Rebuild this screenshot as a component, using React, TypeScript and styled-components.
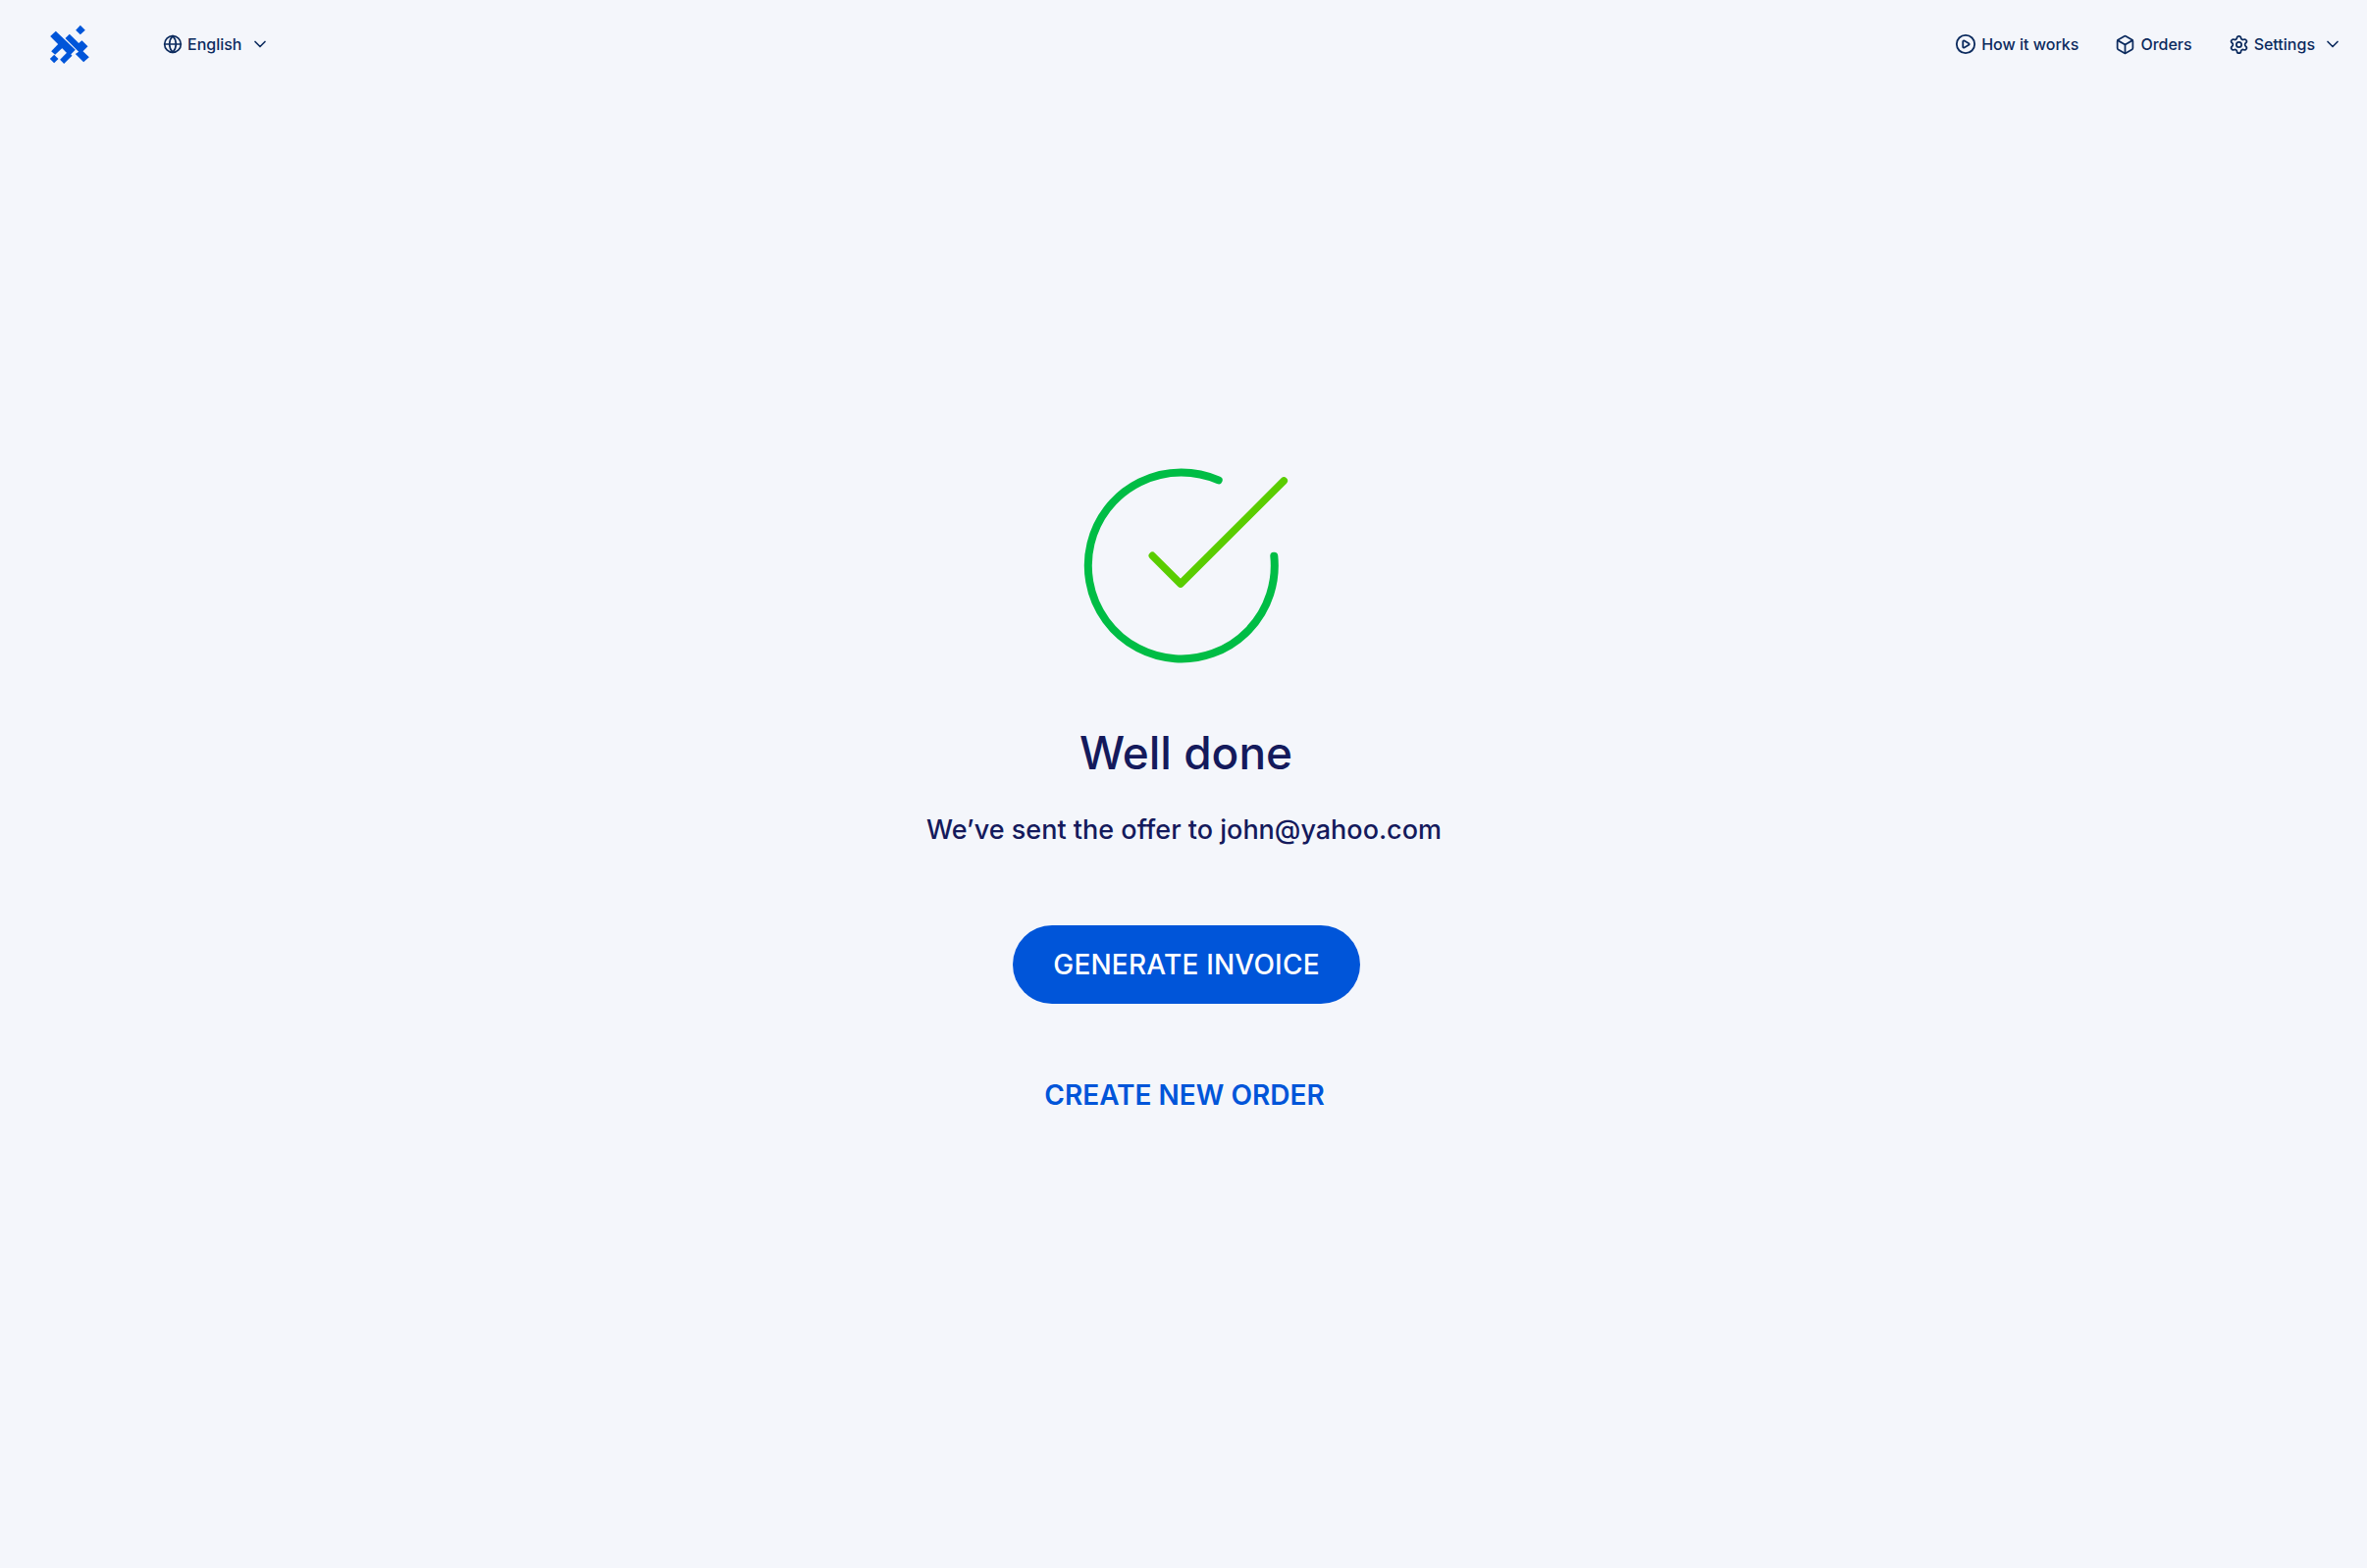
import React from "react";
import styled, {createGlobalStyle} from "styled-components";
import {Box, ChevronDown, CirclePlay, Globe, Settings} from "lucide-react";

const GlobalStyle = createGlobalStyle`
  html, body {
    margin: 0;
    padding: 0;
    background: #f4f6fb;
  }

  body {
    font-family: Inter, "Open Sans", sans-serif;
  }
`

const Page = styled.div`
  width: 2412px;
  height: 1598px;
  display: flex;
  flex-direction: column;
  overflow: hidden;
  background: #f4f6fb;
`

const Header = styled.header`
  height: 90px;
  box-sizing: border-box;
  padding: 0 25px 0 50px;
  display: flex;
  align-items: center;
  justify-content: space-between;
`

const LeftGroup = styled.div`
  display: flex;
  align-items: center;
  gap: 74px;
`

const NavGroup = styled.nav`
  display: flex;
  align-items: center;
  gap: 37px;
`

const NavItem = styled.div`
  display: flex;
  align-items: center;
  gap: 5px;
  color: #0c2b5e;
  font-size: 16px;
  font-weight: 500;
  line-height: 20px;
`

const Caret = styled(ChevronDown)`
  margin-left: 3px;
`

const Main = styled.main`
  display: flex;
  flex-direction: column;
  align-items: center;
  padding-top: 385px;
`

const SuccessIcon = styled.svg`
  display: block;
  width: 220px;
  height: 210px;
  margin-left: 14px;
`

const Title = styled.h1`
  margin: 54px 0 0 5px;
  color: #141a5c;
  font-size: 46px;
  font-weight: 500;
  line-height: 56px;
`

const Message = styled.p`
  margin: 33px 0 0 1px;
  color: #141a5c;
  font-size: 27px;
  font-weight: 500;
  line-height: 36px;
`

const PrimaryButton = styled.button`
  margin: 79px 0 0 6px;
  width: 354px;
  height: 80px;
  border: none;
  border-radius: 40px;
  background: #0055d9;
  color: #fff;
  font-family: inherit;
  font-size: 28px;
  font-weight: 500;
  letter-spacing: 0.2px;
  cursor: pointer;
`

const TextButton = styled.button`
  margin: 75px 0 0 2px;
  padding: 0;
  border: none;
  background: none;
  color: #0055d9;
  font-family: inherit;
  font-size: 28px;
  font-weight: 600;
  line-height: 36px;
  cursor: pointer;
`

function Logo() {
    return (
        <svg width="42" height="40" viewBox="60 43 125 120" fill="#0055d9">
            <polygon points="155,45 170,60 155,74 141,60"/>
            <polygon points="80,63 63,79 122,138 140,120"/>
            <polygon points="122,72 142,92 150,100 160,92 178,110 163,125 182,143 165,158 140,133 150,126 109,85"/>
            <polygon points="90,100 66,125 78,135 103,112"/>
            <polygon points="118,125 93,150 105,163 130,138"/>
            <polygon points="62,148 75,135 88,148 75,161"/>
        </svg>
    );
}

export default function App() {
    return (
        <Page>
            <GlobalStyle/>
            <Header>
                <LeftGroup>
                    <Logo/>
                    <NavItem>
                        <Globe size={20} strokeWidth={2}/>
                        English
                        <Caret size={20} strokeWidth={2}/>
                    </NavItem>
                </LeftGroup>
                <NavGroup>
                    <NavItem>
                        <CirclePlay size={22} strokeWidth={2}/>
                        How it works
                    </NavItem>
                    <NavItem>
                        <Box size={21} strokeWidth={2}/>
                        Orders
                    </NavItem>
                    <NavItem>
                        <Settings size={21} strokeWidth={2}/>
                        Settings
                        <Caret size={20} strokeWidth={2}/>
                    </NavItem>
                </NavGroup>
            </Header>
            <Main>
                <SuccessIcon viewBox="0 0 220 210" fill="none" strokeLinecap="round" strokeLinejoin="round">
                    <path d="M 138.7 14.3 A 95 95 0 1 0 195.3 91.7" stroke="#00bd45" strokeWidth="8"/>
                    <path d="M 71.3 91.3 L 100 120 L 205.3 15" stroke="#5acd00" strokeWidth="7.5"/>
                </SuccessIcon>
                <Title>Well done</Title>
                <Message>We’ve sent the offer to john@yahoo.com</Message>
                <PrimaryButton>GENERATE INVOICE</PrimaryButton>
                <TextButton>CREATE NEW ORDER</TextButton>
            </Main>
        </Page>
    );
}
